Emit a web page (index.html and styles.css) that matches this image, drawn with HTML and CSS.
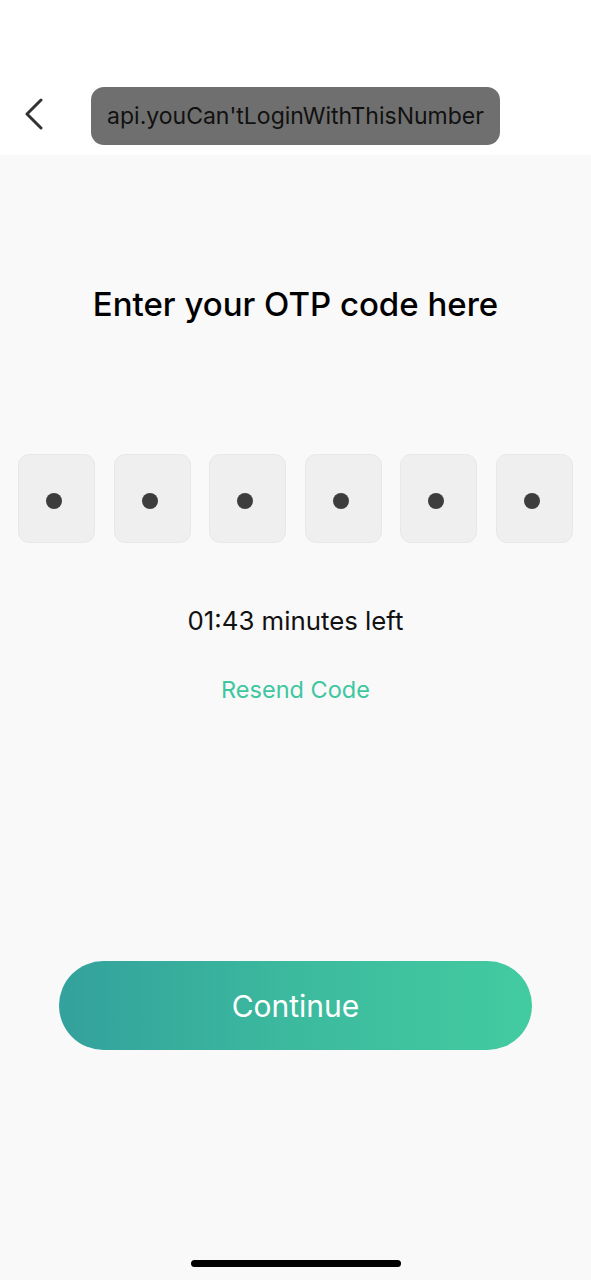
FILE: index.html
```html
<!DOCTYPE html>
<html>
<head>
<meta charset="utf-8">
<link rel="stylesheet" href="styles.css">
</head>
<body>
<div class="screen">
  <header class="header">
    <button class="back" aria-label="Back">
      <svg width="20" height="32" viewBox="0 0 20 32"><path d="M17 2 L3 16 L17 30" fill="none" stroke="#333" stroke-width="3" stroke-linecap="round" stroke-linejoin="round"/></svg>
    </button>
    <div class="toast">api.youCan'tLoginWithThisNumber</div>
  </header>
  <main class="content">
    <h1 class="title">Enter your OTP code here</h1>
    <div class="otp">
      <div class="cell"><span class="dot"></span></div>
      <div class="cell"><span class="dot"></span></div>
      <div class="cell"><span class="dot"></span></div>
      <div class="cell"><span class="dot"></span></div>
      <div class="cell"><span class="dot"></span></div>
      <div class="cell"><span class="dot"></span></div>
    </div>
    <p class="timer">01:43 minutes left</p>
    <p class="resend">Resend Code</p>
    <div class="spacer"></div>
    <button class="continue">Continue</button>
    <div class="home-bar"></div>
  </main>
</div>
</body>
</html>
```
FILE: styles.css
```css
* { box-sizing: border-box; }
html, body { margin: 0; padding: 0; }
body {
  width: 591px;
  height: 1280px;
  background: #f9f9f9;
  font-family: Inter, "Noto Sans", sans-serif;
  color: #111;
}
.screen {
  height: 1280px;
  display: flex;
  flex-direction: column;
}
.header {
  height: 155px;
  background: #ffffff;
  display: flex;
  align-items: flex-start;
  padding-top: 87px;
  padding-left: 24px;
  gap: 47px;
}
.back {
  border: 0;
  background: none;
  padding: 0;
  margin-top: 11px;
  width: 20px;
  height: 32px;
  display: block;
}
.toast {
  width: 409px;
  height: 58px;
  border-radius: 13px;
  background: #6f6f6f;
  color: #111;
  font-size: 23px;
  display: flex;
  align-items: center;
  justify-content: center;
}
.content {
  flex: 1;
  display: flex;
  flex-direction: column;
  align-items: center;
}
.title {
  margin: 129px 0 0;
  font-size: 33px;
  font-weight: 500;
  line-height: 40px;
  color: #000;
}
.otp {
  margin-top: 130px;
  display: flex;
  gap: 18.6px;
  padding: 0 18px;
  width: 100%;
}
.cell {
  flex: 1;
  height: 89px;
  background: #efefef;
  border: 1px solid #e8e8e8;
  border-radius: 11px;
  display: flex;
  align-items: center;
  justify-content: center;
}
.dot {
  width: 16px;
  height: 16px;
  border-radius: 50%;
  background: #3d3d3d;
  margin-top: 4px;
  margin-right: 5px;
}
.timer {
  margin: 62px 0 0;
  font-size: 25.8px;
  line-height: 32px;
  color: #111;
}
.resend {
  margin: 39px 0 0;
  font-size: 23.5px;
  line-height: 28px;
  color: #3ec79f;
}
.spacer { height: 257px; }
.continue {
  width: 473px;
  height: 89px;
  border: 0;
  border-radius: 45px;
  background: linear-gradient(90deg, #33a19c 0%, #3cba9e 50%, #43cba0 100%);
  color: #fff;
  font-family: Inter, "Noto Sans", sans-serif;
  font-size: 30px;
  font-weight: 400;
}
.home-bar {
  margin-top: auto;
  margin-bottom: 13px;
  width: 210px;
  height: 7px;
  border-radius: 4px;
  background: #000;
}
```
